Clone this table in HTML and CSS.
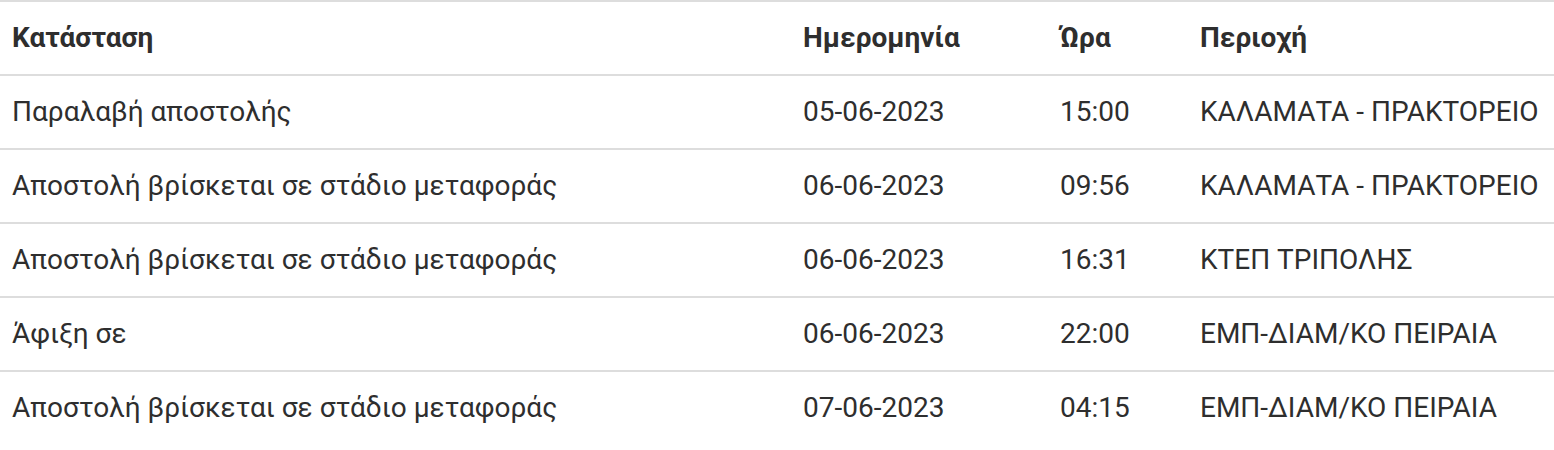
FILE: index.html
```html
<!DOCTYPE html>
<html lang="el">
<head>
<meta charset="utf-8">
<title>Ιστορικό αποστολής</title>
<link rel="stylesheet" href="styles.css">
</head>
<body>
<table class="track">
  <colgroup>
    <col class="c-status">
    <col class="c-date">
    <col class="c-time">
    <col class="c-area">
  </colgroup>
  <thead>
    <tr>
      <th>Κατάσταση</th>
      <th>Ημερομηνία</th>
      <th>Ώρα</th>
      <th>Περιοχή</th>
    </tr>
  </thead>
  <tbody>
    <tr>
      <td>Παραλαβή αποστολής</td>
      <td>05-06-2023</td>
      <td>15:00</td>
      <td>ΚΑΛΑΜΑΤΑ - ΠΡΑΚΤΟΡΕΙΟ</td>
    </tr>
    <tr>
      <td>Αποστολή βρίσκεται σε στάδιο μεταφοράς</td>
      <td>06-06-2023</td>
      <td>09:56</td>
      <td>ΚΑΛΑΜΑΤΑ - ΠΡΑΚΤΟΡΕΙΟ</td>
    </tr>
    <tr>
      <td>Αποστολή βρίσκεται σε στάδιο μεταφοράς</td>
      <td>06-06-2023</td>
      <td>16:31</td>
      <td>ΚΤΕΠ ΤΡΙΠΟΛΗΣ</td>
    </tr>
    <tr>
      <td>Άφιξη σε</td>
      <td>06-06-2023</td>
      <td>22:00</td>
      <td>ΕΜΠ-ΔΙΑΜ/ΚΟ ΠΕΙΡΑΙΑ</td>
    </tr>
    <tr>
      <td>Αποστολή βρίσκεται σε στάδιο μεταφοράς</td>
      <td>07-06-2023</td>
      <td>04:15</td>
      <td>ΕΜΠ-ΔΙΑΜ/ΚΟ ΠΕΙΡΑΙΑ</td>
    </tr>
  </tbody>
</table>
</body>
</html>
```
FILE: styles.css
```css
html, body {
  margin: 0;
  padding: 0;
  background: #ffffff;
}

body {
  font-family: Roboto, "Noto Sans", "DejaVu Sans", sans-serif;
  color: #2e2e2e;
}

.track {
  width: 100%;
  border-collapse: collapse;
  table-layout: fixed;
  border-top: 2px solid #dddddd;
}

.c-status { width: 791px; }
.c-date { width: 257px; }
.c-time { width: 140px; }
.c-area { width: auto; }

.track th,
.track td {
  text-align: left;
  padding: 18px 12px;
  font-size: 28px;
  line-height: 36px;
  white-space: nowrap;
}

.track th {
  font-weight: 700;
}

.track td {
  font-weight: 400;
}

.track thead tr,
.track tbody tr {
  border-bottom: 2px solid #dddddd;
}

.track tbody tr:last-child {
  border-bottom: none;
}
```
